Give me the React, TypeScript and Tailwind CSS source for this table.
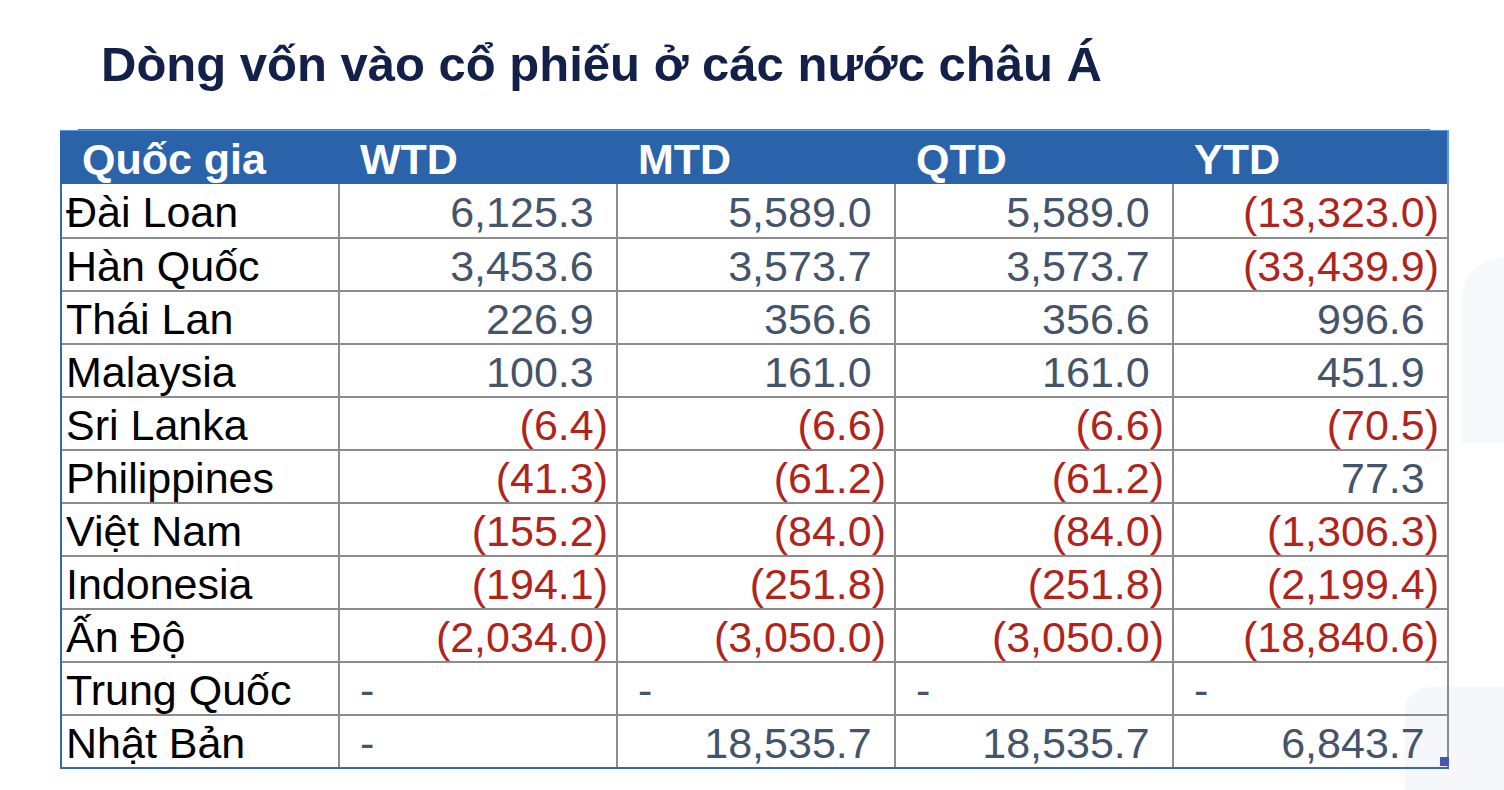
const columns = ['Quốc gia', 'WTD', 'MTD', 'QTD', 'YTD']

type Cell = string

const rows: { name: string; values: Cell[] }[] = [
  { name: 'Đài Loan', values: ['6,125.3', '5,589.0', '5,589.0', '(13,323.0)'] },
  { name: 'Hàn Quốc', values: ['3,453.6', '3,573.7', '3,573.7', '(33,439.9)'] },
  { name: 'Thái Lan', values: ['226.9', '356.6', '356.6', '996.6'] },
  { name: 'Malaysia', values: ['100.3', '161.0', '161.0', '451.9'] },
  { name: 'Sri Lanka', values: ['(6.4)', '(6.6)', '(6.6)', '(70.5)'] },
  { name: 'Philippines', values: ['(41.3)', '(61.2)', '(61.2)', '77.3'] },
  { name: 'Việt Nam', values: ['(155.2)', '(84.0)', '(84.0)', '(1,306.3)'] },
  { name: 'Indonesia', values: ['(194.1)', '(251.8)', '(251.8)', '(2,199.4)'] },
  { name: 'Ấn Độ', values: ['(2,034.0)', '(3,050.0)', '(3,050.0)', '(18,840.6)'] },
  { name: 'Trung Quốc', values: ['-', '-', '-', '-'] },
  { name: 'Nhật Bản', values: ['-', '18,535.7', '18,535.7', '6,843.7'] },
]

const ValueCell = ({ value }: { value: Cell }) => {
  if (value === '-') {
    return <div className="flex h-full items-center pl-[20px] pt-[3px] text-[#44546a]">-</div>
  }
  const negative = value.startsWith('(')
  return (
    <div
      className={`flex h-full items-center justify-end pr-[8px] pt-[3px] ${negative ? 'text-[#b0241c]' : 'text-[#44546a]'}`}
    >
      {value}
      {!negative && <span className="invisible">)</span>}
    </div>
  )
}

const App = () => {
  return (
    <div
      className="relative h-[790px] w-[1504px] overflow-hidden bg-white"
      style={{ fontFamily: '"Liberation Sans", Arial, sans-serif' }}
    >
      {/* faint background shapes */}
      <div className="absolute left-[1462px] top-[258px] h-[185px] w-[80px] rounded-tl-[40px] bg-[#f7f8fb]" />
      <div className="absolute left-[1405px] top-[687px] h-[120px] w-[120px] rounded-tl-[24px] bg-[#f6f7fb]" />

      <div className="relative z-10">
        <h1 className="pl-[101px] pt-[40px] text-[49px] font-bold leading-none text-[#13204a]">
          Dòng vốn vào cổ phiếu ở các nước châu Á
        </h1>

        <div className="ml-[78px] mt-[40px] h-px w-[1352px] bg-[#4f74ad]" />

        <div className="ml-[60px] w-[1389px]">
          <div className="grid h-[54px] grid-cols-[278px_278px_278px_278px_277px] border-r-2 border-t border-[#5b9be6] bg-[#2b63ab] text-[43px] font-bold leading-none text-white">
            {columns.map((c) => (
              <div key={c} className="flex items-center pl-[22px] pt-[4px]">
                {c}
              </div>
            ))}
          </div>

          <div className="border-b-2 border-l-2 border-[#3a66ac]">
            {rows.map((r, i) => (
              <div
                key={r.name}
                className={`grid h-[53px] grid-cols-[276px_278px_278px_278px_277px] text-[43px] leading-none ${i > 0 ? 'border-t-2 border-[#8c8c8c]' : ''}`}
              >
                <div className="flex items-center pl-[4px] pt-[3px] text-black">{r.name}</div>
                {r.values.map((v, j) => (
                  <div key={j} className="border-l-2 border-[#8c8c8c] last:border-r-2">
                    <ValueCell value={v} />
                  </div>
                ))}
              </div>
            ))}
          </div>
        </div>
      </div>

      {/* selection handle */}
      <div className="absolute left-[1440px] top-[757px] z-20 h-[9px] w-[9px] bg-[#4756ad]" />
    </div>
  )
}

export default App
